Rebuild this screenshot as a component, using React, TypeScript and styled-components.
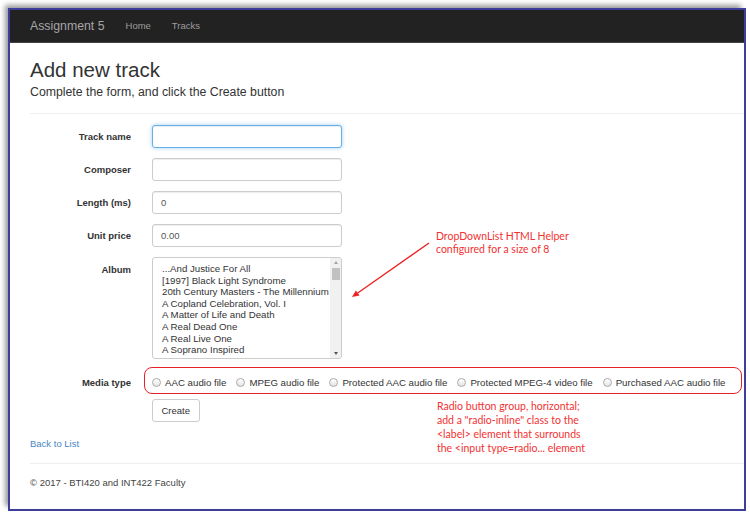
import React from "react";
import styled, { createGlobalStyle } from "styled-components";

const Global = createGlobalStyle`
  html, body { margin: 0; padding: 0; background: #ffffff; }
  body { font-family: "Liberation Sans", Arial, Helvetica, sans-serif; color: #333; }
  * { box-sizing: border-box; }
`;

const Frame = styled.div`
  position: relative;
  margin: 8px 0 0 8px;
  width: 738px;
  height: 503px;
  border: 2px solid #3d3d9b;
  background: #fff;
  box-shadow: -4px -4px 5px -1px rgba(0, 0, 0, 0.4);
`;

const Navbar = styled.nav`
  display: flex;
  align-items: center;
  gap: 21px;
  height: 33px;
  padding: 0 0 1px 20px;
  background: #222;
  border-bottom: 1px solid #454545;
`;

const Brand = styled.span`
  font-size: 12.3px;
  color: #a6a6a6;
`;

const NavLink = styled.span`
  font-size: 9.5px;
  color: #9d9d9d;
`;

const Container = styled.main`
  padding: 0 0 0 20px;
`;

const Title = styled.h2`
  margin: 15px 0 0;
  font-size: 20.5px;
  font-weight: 400;
  line-height: 24px;
  color: #333;
`;

const Lead = styled.p`
  margin: 3px 0 0;
  font-size: 12.3px;
  line-height: 15px;
  color: #333;
`;

const Rule = styled.hr<{ $mt: number }>`
  margin: ${(p) => p.$mt}px 0 0;
  border: 0;
  border-top: 1px solid #eee;
`;

const Form = styled.form`
  margin-top: 11px;
  display: grid;
  grid-template-columns: 101px 1fr;
  column-gap: 21px;
  row-gap: 10px;
`;

const FieldLabel = styled.label<{ $top?: boolean; $media?: boolean }>`
  text-align: right;
  font-weight: 700;
  font-size: 9.5px;
  line-height: 13px;
  color: #333;
  align-self: ${(p) => (p.$top ? "start" : "center")};
  padding-top: ${(p) => (p.$top ? "6px" : "0")};
  margin: ${(p) => (p.$media ? "3px 0 -4px" : "0")};
`;

const TextInput = styled.input<{ $focus?: boolean }>`
  width: 190px;
  height: 23px;
  padding: 0 8px;
  border: 1px solid ${(p) => (p.$focus ? "#66afe9" : "#ccc")};
  border-radius: 3px;
  font-family: inherit;
  font-size: 9.5px;
  color: #555;
  background: #fff;
  outline: none;
  box-shadow: inset 0 1px 1px rgba(0, 0, 0, 0.075)
    ${(p) => (p.$focus ? ", 0 0 4px rgba(102, 175, 233, 0.6)" : "")};
`;

const ListBox = styled.div`
  display: flex;
  width: 190px;
  height: 102px;
  border: 1px solid #ccc;
  border-radius: 3px;
  overflow: hidden;
  background: #fff;
`;

const OptionList = styled.div`
  flex: 1;
  min-width: 0;
  padding: 5px 0 0 9px;
  overflow: hidden;
  font-size: 9.7px;
  line-height: 11.6px;
  color: #333;
  white-space: nowrap;
`;

const OptionItem = styled.div``;

const Scrollbar = styled.div`
  width: 11px;
  display: flex;
  flex-direction: column;
  align-items: center;
  background: #f1f1f1;
  padding: 3px 0 3px;
`;

const ScrollArrow = styled.div<{ $down?: boolean }>`
  width: 0;
  height: 0;
  border-left: 2.5px solid transparent;
  border-right: 2.5px solid transparent;
  ${(p) => (p.$down ? "border-top: 3px solid #555;" : "border-bottom: 3px solid #a3a3a3;")}
  margin-top: ${(p) => (p.$down ? "auto" : "0")};
`;

const ScrollThumb = styled.div`
  width: 8px;
  height: 12px;
  margin-top: 4px;
  background: #c1c1c1;
`;

const RadioGroup = styled.div`
  position: relative;
  display: flex;
  align-items: center;
  height: 21px;
  margin: 3px 0 -4px;
`;

const RadioLabel = styled.label`
  display: inline-flex;
  align-items: center;
  gap: 4px;
  margin-right: 10px;
  font-size: 9.7px;
  color: #333;
  white-space: nowrap;
`;

const RadioDot = styled.span`
  width: 9px;
  height: 9px;
  border-radius: 50%;
  border: 1px solid #a9a9a9;
  background: linear-gradient(#ffffff, #e4e4e4);
`;

const RedBox = styled.div`
  position: absolute;
  left: -8px;
  top: -5px;
  width: 598px;
  height: 27px;
  border: 1.5px solid #e8202a;
  border-radius: 8px;
  pointer-events: none;
`;

const ButtonCell = styled.div`
  grid-column: 2;
`;

const CreateButton = styled.button`
  height: 23px;
  padding: 0 8.5px;
  border: 1px solid #ccc;
  border-radius: 3px;
  background: #fff;
  font-family: inherit;
  font-size: 9.5px;
  color: #333;
`;

const BackLink = styled.a`
  display: block;
  margin-top: 15px;
  font-size: 9.5px;
  line-height: 13.6px;
  color: #4a86c5;
  text-decoration: none;
`;

const Footer = styled.p`
  margin: 12px 0 0;
  font-size: 9.5px;
  line-height: 13.6px;
  color: #444;
`;

const Note = styled.div<{ $x: number; $y: number; $lh: number }>`
  position: absolute;
  left: ${(p) => p.$x}px;
  top: ${(p) => p.$y}px;
  font-family: Lato, "Liberation Sans", sans-serif;
  font-size: 10.5px;
  line-height: ${(p) => p.$lh}px;
  color: #f23232;
  white-space: nowrap;
`;

const ArrowSvg = styled.svg`
  position: absolute;
  left: 330px;
  top: 225px;
`;

const albums = [
  "...And Justice For All",
  "[1997] Black Light Syndrome",
  "20th Century Masters - The Millennium Collection: The Best of Scorpions",
  "A Copland Celebration, Vol. I",
  "A Matter of Life and Death",
  "A Real Dead One",
  "A Real Live One",
  "A Soprano Inspired",
  "A TempestadeTempestade Ou O Livro Dos Dias",
];

const mediaTypes = [
  "AAC audio file",
  "MPEG audio file",
  "Protected AAC audio file",
  "Protected MPEG-4 video file",
  "Purchased AAC audio file",
];

export default function App() {
  return (
    <>
      <Global />
      <Frame>
        <Navbar>
          <Brand>Assignment 5</Brand>
          <NavLink>Home</NavLink>
          <NavLink>Tracks</NavLink>
        </Navbar>
        <Container>
          <Title>Add new track</Title>
          <Lead>Complete the form, and click the Create button</Lead>
          <Rule $mt={13} />
          <Form onSubmit={(e) => e.preventDefault()}>
            <FieldLabel>Track name</FieldLabel>
            <TextInput $focus readOnly defaultValue="" />
            <FieldLabel>Composer</FieldLabel>
            <TextInput readOnly defaultValue="" />
            <FieldLabel>Length (ms)</FieldLabel>
            <TextInput readOnly defaultValue="0" />
            <FieldLabel>Unit price</FieldLabel>
            <TextInput readOnly defaultValue="0.00" />
            <FieldLabel $top>Album</FieldLabel>
            <ListBox>
              <OptionList>
                {albums.map((a) => (
                  <OptionItem key={a}>{a}</OptionItem>
                ))}
              </OptionList>
              <Scrollbar>
                <ScrollArrow />
                <ScrollThumb />
                <ScrollArrow $down />
              </Scrollbar>
            </ListBox>
            <FieldLabel $media>Media type</FieldLabel>
            <RadioGroup>
              {mediaTypes.map((m) => (
                <RadioLabel key={m}>
                  <RadioDot />
                  {m}
                </RadioLabel>
              ))}
              <RedBox />
            </RadioGroup>
            <ButtonCell>
              <CreateButton type="button">Create</CreateButton>
            </ButtonCell>
          </Form>
          <BackLink href="#">Back to List</BackLink>
          <Rule $mt={12} />
          <Footer>© 2017 - BTI420 and INT422 Faculty</Footer>
        </Container>
        <Note $x={426} $y={220} $lh={13}>
          DropDownList HTML Helper
          <br />
          configured for a size of 8
        </Note>
        <ArrowSvg width="100" height="75" viewBox="0 0 100 75">
          <line x1="89" y1="8" x2="17.7" y2="58" stroke="#ee2222" strokeWidth="1.4" />
          <polygon points="12,62 19.6,60.6 15.9,55.4" fill="#ee2222" />
        </ArrowSvg>
        <Note $x={427} $y={389} $lh={14}>
          Radio button group, horizontal;
          <br />
          add a "radio-inline" class to the
          <br />
          &lt;label&gt; element that surrounds
          <br />
          the &lt;input type=radio... element
        </Note>
      </Frame>
    </>
  );
}
